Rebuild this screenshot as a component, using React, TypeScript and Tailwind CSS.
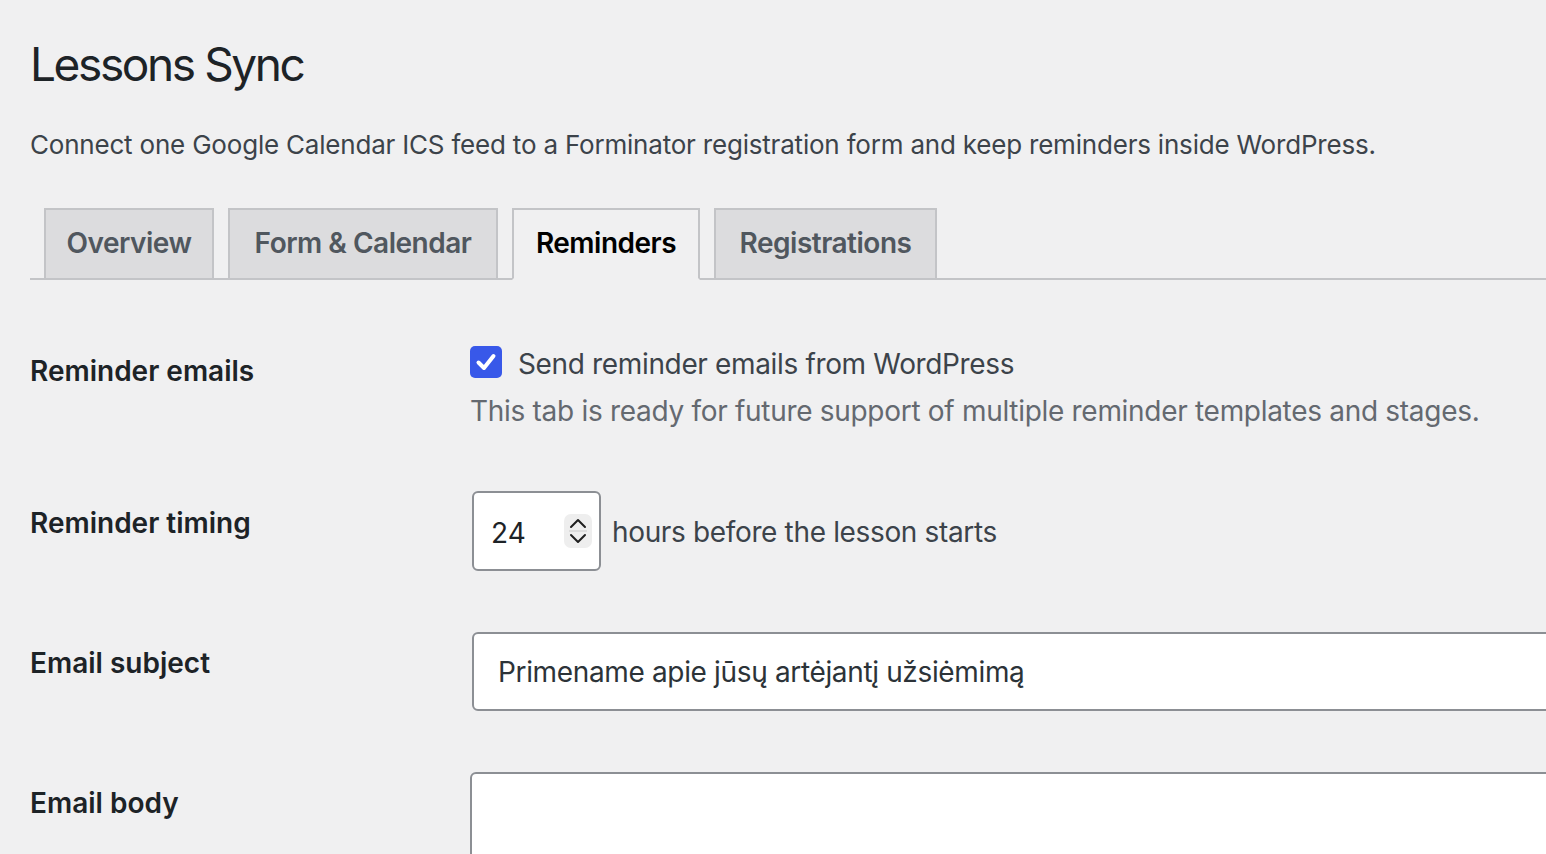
import React from 'react';

const tabs = [
  { label: 'Overview', width: 'w-[170px]', active: false },
  { label: 'Form & Calendar', width: 'w-[270px]', active: false },
  { label: 'Reminders', width: 'w-[188px]', active: true },
  { label: 'Registrations', width: 'w-[223px]', active: false },
];

const Spinner = () => (
  <svg width="28" height="34" viewBox="0 0 28 34" className="shrink-0">
    <rect x="0" y="0" width="28" height="34" rx="7" fill="#eeeeee" />
    <path d="M7 13 L14 6 L21 13" fill="none" stroke="#1f1f1f" strokeWidth="2" strokeLinecap="round" strokeLinejoin="round" />
    <line x1="5" y1="17" x2="23" y2="17" stroke="#d6d6d6" strokeWidth="1.5" />
    <path d="M7 21 L14 28 L21 21" fill="none" stroke="#1f1f1f" strokeWidth="2" strokeLinecap="round" strokeLinejoin="round" />
  </svg>
);

const Label = ({ children, pt }: { children: React.ReactNode; pt: string }) => (
  <div className={`w-[440px] shrink-0 text-[28px] leading-[36px] font-semibold text-[#1d2327] ${pt}`}>{children}</div>
);

export default function App() {
  return (
    <div className="min-h-screen w-full overflow-hidden bg-[#f0f0f1] font-['Inter','Noto_Sans',sans-serif] text-[#3c434a]">
      <div className="pl-[30px]">
        <h1 className="pt-[34px] text-[46px] leading-[60px] font-normal text-[#1d2327] tracking-[-2.4px]">Lessons Sync</h1>
        <p className="mt-[33px] text-[26px] leading-[36px] text-[#3c434a] tracking-[-0.2px]">
          Connect one Google Calendar ICS feed to a Forminator registration form and keep reminders inside WordPress.
        </p>

        {/* Tabs */}
        <nav className="mt-[45px] flex h-[72px] items-start border-b-2 border-[#c3c4c7]">
          {tabs.map((t) => (
            <div
              key={t.label}
              className={`ml-[14px] -mb-[2px] h-[72px] ${t.width} shrink-0 border-2 border-[#c3c4c7] pt-[15px] pb-[17px] text-center text-[28px] leading-[36px] font-semibold tracking-[-0.5px] ${
                t.active ? 'bg-[#f0f0f1] border-b-[#f0f0f1] text-black' : 'bg-[#dcdcde] text-[#50575e]'
              }`}
            >
              {t.label}
            </div>
          ))}
        </nav>

        {/* Reminder emails */}
        <div className="mt-[66px] flex items-start">
          <Label pt="pt-[7px]">Reminder emails</Label>
          <div>
            <div className="flex items-start">
              <div className="flex h-[32px] w-[32px] shrink-0 items-center justify-center rounded-[5px] bg-[#3858e9]">
                <svg width="24" height="24" viewBox="0 0 24 24">
                  <path d="M4.5 12.5 L10 18 L19.5 6" fill="none" stroke="#fff" strokeWidth="4" strokeLinecap="round" strokeLinejoin="round" />
                </svg>
              </div>
              <span className="ml-[16px] text-[28px] leading-[36px] tracking-[-0.35px] text-[#3c434a]">Send reminder emails from WordPress</span>
            </div>
            <p className="mt-[11px] text-[28px] leading-[36px] tracking-[-0.3px] text-[#646970]">
              This tab is ready for future support of multiple reminder templates and stages.
            </p>
          </div>
        </div>

        {/* Reminder timing */}
        <div className="mt-[62px] flex items-start">
          <Label pt="pt-[14px]">Reminder timing</Label>
          <div className="flex items-center">
            <div className="ml-[2px] flex h-[80px] w-[129px] shrink-0 items-center justify-between rounded-[6px] border-2 border-[#8c8f94] bg-white pl-[17px] pr-[7px]">
              <span className="pt-[3px] text-[28px] leading-[36px] text-[#1d2327]">24</span>
              <Spinner />
            </div>
            <span className="ml-[11px] pt-[2px] text-[28px] leading-[36px] tracking-[-0.35px] text-[#3c434a]">hours before the lesson starts</span>
          </div>
        </div>

        {/* Email subject */}
        <div className="mt-[61px] flex items-start">
          <Label pt="pt-[13px]">Email subject</Label>
          <div className="ml-[2px] flex h-[79px] w-[1300px] shrink-0 items-center rounded-[6px] border-2 border-[#8c8f94] bg-white pl-[24px]">
            <span className="text-[28px] leading-[36px] tracking-[-0.35px] text-[#2c3338]">Primename apie jūsų artėjantį užsiėmimą</span>
          </div>
        </div>

        {/* Email body */}
        <div className="mt-[61px] flex items-start">
          <Label pt="pt-[13px]">Email body</Label>
          <div className="h-[240px] w-[1300px] shrink-0 rounded-[6px] border-2 border-[#8c8f94] bg-white" />
        </div>
      </div>
    </div>
  );
}
